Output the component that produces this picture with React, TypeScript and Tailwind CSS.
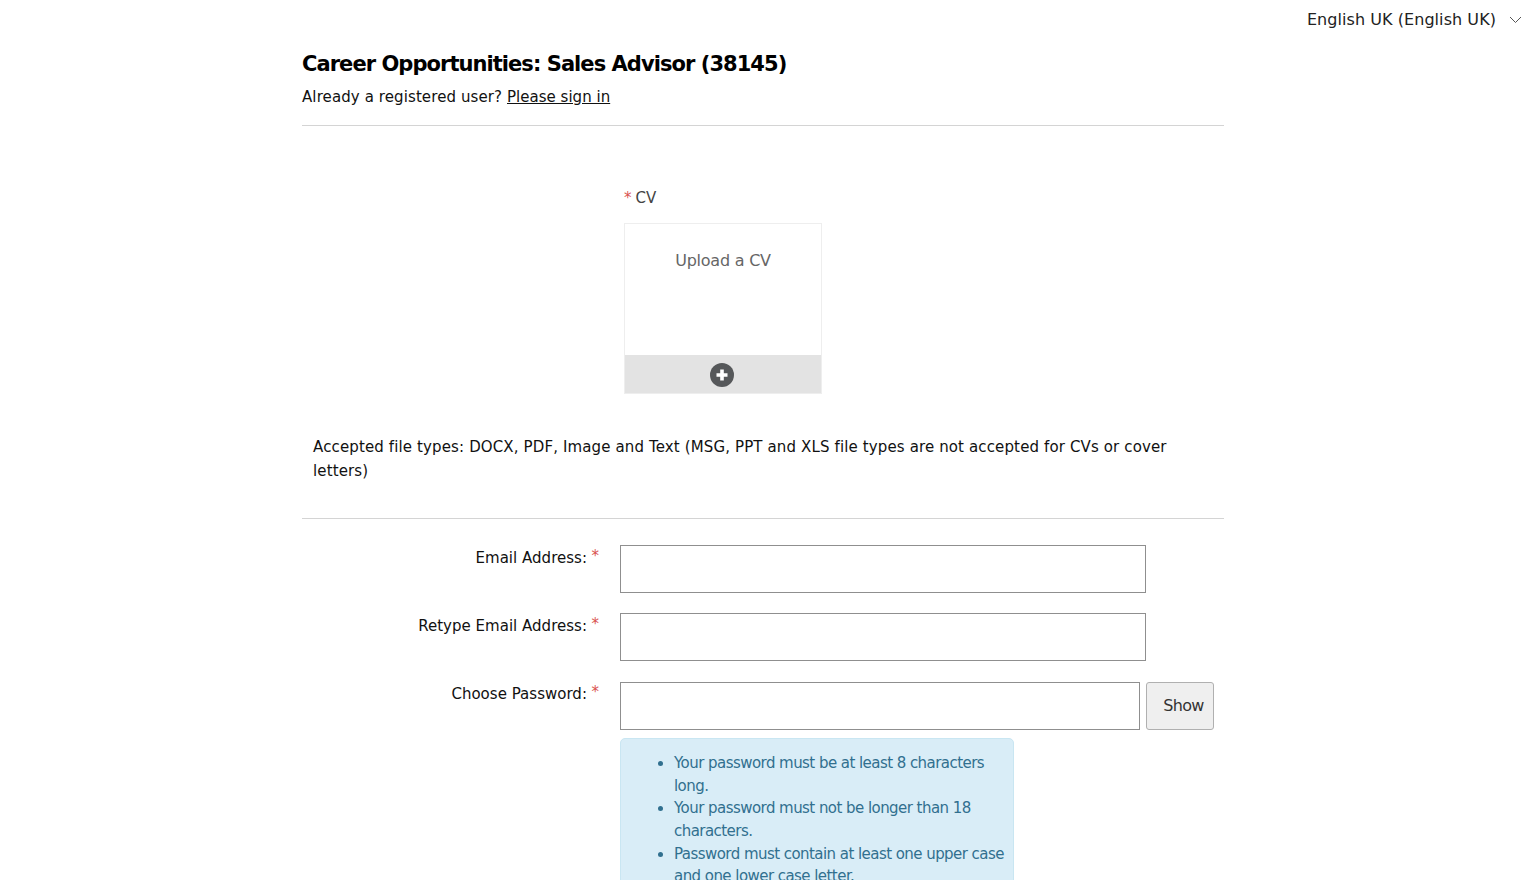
const font = { fontFamily: '"DejaVu Sans", sans-serif' };

function Star() {
  return <span className="absolute right-[-12px] top-[-4px] text-[#d9534f]">*</span>;
}

function FieldRow({ label, children }: { label: string; children: React.ReactNode }) {
  return <div className="flex">
    <label className="w-[285px] pt-[1.6px] text-right leading-[22px]">
      <span className="relative">{label}<Star /></span>
    </label>
    <div className="ml-[33px] flex-1">{children}</div>
  </div>;
}

const textInput = "block h-[48px] border border-[#8f8f8f] bg-white";

export default function App() {
  return <div style={font} className="h-[880px] w-[1536px] overflow-hidden bg-white text-[15px] tracking-[0.02px] text-[#111]">
    <div className="flex h-[38px] items-center justify-end pt-[2px] pr-[14px]">
      <span className="text-[16px] tracking-[0.06px] text-[#222]">English UK (English UK)</span>
      <svg className="ml-[13px]" width="13" height="8" viewBox="0 0 13 8" fill="none" stroke="#555" strokeWidth="1"><path d="M1 1l5.5 5.5L12 1" /></svg>
    </div>

    <main className="ml-[302px] w-[922px]">
      <h1 className="mt-[11px] text-[21px] leading-[30px] font-bold tracking-[-0.95px] text-black">Career Opportunities: Sales Advisor (38145)</h1>
      <p className="mt-[7px] leading-[22px]"><span className="tracking-[0.1px]">Already a registered user? </span><a className="underline" href="#">Please sign in</a></p>
      <div className="mt-[17px] border-t border-[#d4d4d4]" />

      <div className="mt-[61px] ml-[322px] w-[198px]">
        <div className="leading-[22px] text-[#444]"><span className="mr-[4px] text-[#d9534f]">*</span>CV</div>
        <div className="mt-[14px] border border-[#eeeeee]">
          <div className="h-[131px] bg-white pt-[26px] text-center text-[16px] leading-[22px] tracking-[-0.23px] text-[#666]">Upload a CV</div>
          <div className="flex h-[38px] items-center justify-center bg-[#e3e3e3] pt-[1px] pr-[2px]">
            <svg width="24" height="24" viewBox="0 0 24 24"><circle cx="12" cy="12" r="12" fill="#56585a" /><path d="M12 6.5v11M6.5 12h11" stroke="#fff" strokeWidth="3.6" /></svg>
          </div>
        </div>
      </div>

      <p className="mt-[41px] px-[11px] leading-[24px] tracking-[0.13px]">Accepted file types: DOCX, PDF, Image and Text (MSG, PPT and XLS file types are not accepted for CVs or cover letters)</p>
      <div className="mt-[35px] border-t border-[#d4d4d4]" />

      <div className="mt-[26px] flex flex-col gap-[20.4px]">
        <FieldRow label="Email Address:"><div className={`${textInput} w-[526px]`} /></FieldRow>
        <FieldRow label="Retype Email Address:"><div className={`${textInput} w-[526px]`} /></FieldRow>
        <FieldRow label="Choose Password:">
          <div className="flex gap-[6px]">
            <div className={`${textInput} w-[520px]`} />
            <button className="h-[48px] w-[68px] rounded-[3px] border border-[#b0b0b0] bg-[#efefef] pl-[7px] text-[16px] tracking-[-0.7px] text-[#333]">Show</button>
          </div>
          <div className="mt-[8px] w-[394px] rounded-[5px] border border-[#c9e6f2] bg-[#d9edf7] pt-[13.5px] pr-[7px] pb-[13px] pl-[53px] tracking-[-0.55px] text-[#31708f]">
            <ul className="list-disc leading-[22.6px]">
              <li>Your password must be at least 8 characters long.</li>
              <li>Your password must not be longer than 18 characters.</li>
              <li>Password must contain at least one upper case and one lower case letter.</li>
            </ul>
          </div>
        </FieldRow>
      </div>
    </main>
  </div>;
}
